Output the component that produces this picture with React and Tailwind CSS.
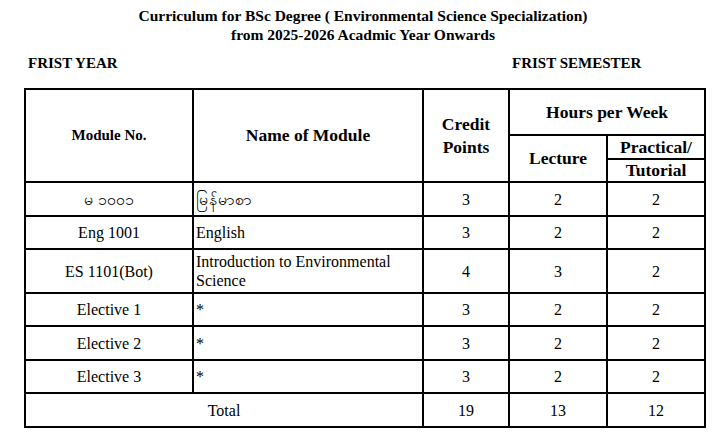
const rows = [
  { no: "မ ၁၀၀၁", name: "မြန်မာစာ", credit: 3, lecture: 2, practical: 2, h: "h-[34px]" },
  { no: "Eng 1001", name: "English", credit: 3, lecture: 2, practical: 2, h: "h-[33px]" },
  {
    no: "ES 1101(Bot)",
    name: "Introduction to Environmental Science",
    credit: 4,
    lecture: 3,
    practical: 2,
    h: "h-[44px]",
  },
  { no: "Elective 1", name: "*", credit: 3, lecture: 2, practical: 2, h: "h-[33px]" },
  { no: "Elective 2", name: "*", credit: 3, lecture: 2, practical: 2, h: "h-[34px]" },
  { no: "Elective 3", name: "*", credit: 3, lecture: 2, practical: 2, h: "h-[33px]" },
];

const cell = "border-2 border-black p-0 align-middle";

export default function App() {
  return (
    <div
      className="w-[726px] h-[433px] bg-white text-black overflow-hidden"
      style={{ fontFamily: '"Liberation Serif", "Noto Sans", serif' }}
    >
      <div className="pt-[6px] text-center font-bold text-[15.5px] leading-[19px]">
        <p>Curriculum for BSc Degree ( Environmental Science Specialization)</p>
        <p>from 2025-2026 Acadmic Year Onwards</p>
      </div>

      <div className="flex mt-[10px] h-[18px] items-center font-bold text-[15px]">
        <p className="ml-[28px] w-[484px]">FRIST YEAR</p>
        <p>FRIST SEMESTER</p>
      </div>

      <table className="ml-[24px] mt-[16px] w-[680px] table-fixed border-collapse border-2 border-black">
        <colgroup>
          <col className="w-[168px]" />
          <col className="w-[230px]" />
          <col className="w-[86px]" />
          <col className="w-[98px]" />
          <col className="w-[98px]" />
        </colgroup>
        <thead className="font-bold text-[17.5px] leading-[21px]">
          <tr className="h-[46px]">
            <th rowSpan={3} className={`${cell} text-[15px]`}>
              Module No.
            </th>
            <th rowSpan={3} className={cell}>
              Name of Module
            </th>
            <th rowSpan={3} className={`${cell} leading-[23px]`}>
              Credit
              <br />
              Points
            </th>
            <th colSpan={2} className={cell}>
              Hours per Week
            </th>
          </tr>
          <tr className="h-[24px]">
            <th rowSpan={2} className={cell}>
              Lecture
            </th>
            <th className={cell}>Practical/</th>
          </tr>
          <tr className="h-[22px]">
            <th className={cell}>Tutorial</th>
          </tr>
        </thead>
        <tbody className="text-[16px] leading-[19px]">
          {rows.map((r) => (
            <tr key={r.no} className={r.h}>
              <td className={`${cell} text-center`}>{r.no}</td>
              <td className={`${cell} text-left pl-[2px] pr-[20px]`}>{r.name}</td>
              <td className={`${cell} text-center`}>{r.credit}</td>
              <td className={`${cell} text-center`}>{r.lecture}</td>
              <td className={`${cell} text-center`}>{r.practical}</td>
            </tr>
          ))}
          <tr className="h-[34px]">
            <td colSpan={2} className={`${cell} text-center`}>
              Total
            </td>
            <td className={`${cell} text-center`}>19</td>
            <td className={`${cell} text-center`}>13</td>
            <td className={`${cell} text-center`}>12</td>
          </tr>
        </tbody>
      </table>
    </div>
  );
}
